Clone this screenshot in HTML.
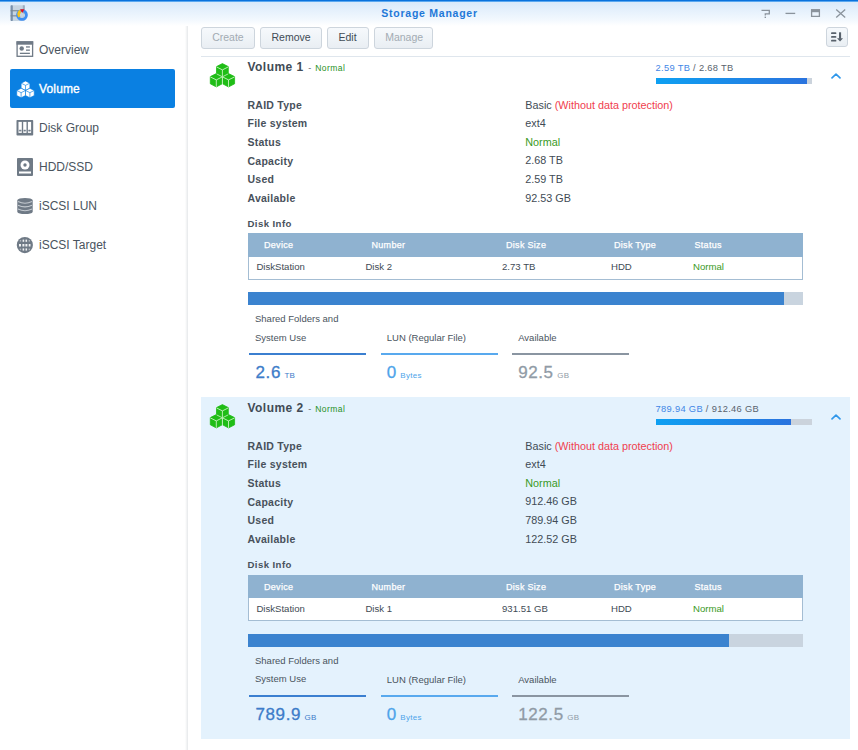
<!DOCTYPE html>
<html><head><meta charset="utf-8"><style>
html,body{margin:0;padding:0;width:858px;height:750px;overflow:hidden;background:#fff;}
body{position:relative;font-family:"Liberation Sans", sans-serif;}
.t{position:absolute;white-space:nowrap;line-height:1;}
.r{position:absolute;}
</style></head><body>
<div class="r" style="left:0px;top:0px;width:858px;height:26px;background:linear-gradient(#d6e8fa,#f4f9fe 80%,#ffffff);"></div>
<div class="r" style="left:0px;top:0px;width:858px;height:1px;background:#0a72dc;"></div>
<div class="r" style="left:0px;top:1px;width:858px;height:0.6px;background:#5aa8f0;"></div>
<div class="t" style="left:381.3px;top:8.31px;font-size:10.5px;color:#1e78d8;font-weight:700;letter-spacing:0.75px;">Storage Manager</div>
<svg class="r" style="left:9px;top:3px" width="22" height="21" viewBox="0 0 22 21">
<rect x="1.6" y="2.3" width="14" height="15.6" rx="1" fill="#c6d4e1"/>
<rect x="1.6" y="2.3" width="2.2" height="15.6" rx="0.6" fill="#7890ab"/>
<rect x="13.8" y="2.3" width="2" height="9" fill="#9aacbf"/>
<rect x="1.6" y="7.2" width="13" height="1.1" fill="#7b8793"/>
<rect x="1.6" y="12.3" width="13" height="1.1" fill="#7b8793"/>
<circle cx="13" cy="12" r="4.4" fill="none" stroke="#3e8ff2" stroke-width="2.9"/>
<path d="M9.3 14.6 Q6.5 9.5 11.2 6.6 L12.2 10.6 Q10.6 12 10.9 13.6 Z" fill="#f7c21a"/>
<path d="M11.1 6.2 L15.4 6.3 L13.3 10 Z" fill="#e8101c"/>
<circle cx="13" cy="12" r="2.2" fill="#c6d4e1"/>
</svg>
<svg class="r" style="left:755px;top:2px" width="100" height="22" viewBox="0 0 100 22">
<g fill="none" stroke="#8a939c" stroke-width="1.3">
<path d="M6.5 8.3 L14.3 8.3 L14.3 11.8 L10.3 11.8 L10.3 13.5"/>
<path d="M30.5 11.4 L40.2 11.4"/>
<path d="M56.6 7.8 L64.4 7.8 L64.4 14.3 L56.6 14.3 Z"/>
<path d="M81.2 7.4 L90.2 15.4 M90.2 7.4 L81.2 15.4"/>
</g>
<rect x="9.6" y="14.6" width="1.4" height="1.4" fill="#8a939c"/>
<rect x="56" y="7.2" width="9" height="3" fill="#8a939c"/>
</svg>
<div class="r" style="left:184.5px;top:26px;width:3.5px;height:724px;background:linear-gradient(90deg,#ffffff,#f3f4f5 50%,#e5e8ea);"></div>
<div class="r" style="left:10px;top:69px;width:165px;height:39px;background:#0a80e2;border-radius:2px;"></div>
<div class="t" style="left:39px;top:43.84px;font-size:12px;color:#4a545e;font-weight:400;letter-spacing:0px;">Overview</div>
<div class="t" style="left:39px;top:82.84px;font-size:12px;color:#ffffff;font-weight:400;letter-spacing:0.15px;-webkit-text-stroke:0.35px #fff;">Volume</div>
<div class="t" style="left:39px;top:121.84px;font-size:12px;color:#4a545e;font-weight:400;letter-spacing:0px;">Disk Group</div>
<div class="t" style="left:39px;top:160.84px;font-size:12px;color:#4a545e;font-weight:400;letter-spacing:0px;">HDD/SSD</div>
<div class="t" style="left:39px;top:199.84px;font-size:12px;color:#4a545e;font-weight:400;letter-spacing:0px;">iSCSI LUN</div>
<div class="t" style="left:39px;top:238.84px;font-size:12px;color:#4a545e;font-weight:400;letter-spacing:0px;">iSCSI Target</div>
<svg class="r" style="left:16px;top:41px" width="18" height="17" viewBox="0 0 18 17">
<rect x="1.1" y="0.9" width="15.5" height="14.4" fill="none" stroke="#6f7a86" stroke-width="1.3"/>
<rect x="0.5" y="0.3" width="16.7" height="3.4" fill="#6f7a86"/>
<circle cx="5.7" cy="7.5" r="2.2" fill="#6f7a86"/>
<rect x="10" y="5.3" width="3.9" height="1.3" fill="#6f7a86"/>
<rect x="10" y="8.5" width="3.9" height="1.3" fill="#6f7a86"/>
<rect x="3.9" y="11.7" width="10" height="1.3" fill="#6f7a86"/>
</svg>
<svg class="r" style="left:15.5px;top:79.8px" width="19" height="18" viewBox="0 0 26 24">
<g fill="#ffffff" stroke="#0a80e2" stroke-width="0.9" stroke-linejoin="round">
<path d="M13 1 L19 4 L19 11 L13 14 L7 11 L7 4 Z"/>
<path d="M7 11 L13 14 L13 21 L7 24 L1 21 L1 14 Z"/>
<path d="M19 11 L25 14 L25 21 L19 24 L13 21 L13 14 Z"/>
</g>
<g fill="none" stroke="#0a80e2" stroke-width="0.9">
<path d="M7 4 L13 7 L19 4 M13 7 L13 14"/>
<path d="M1 14 L7 17 L13 14 M7 17 L7 24"/>
<path d="M13 14 L19 17 L25 14 M19 17 L19 24"/>
</g></svg>
<svg class="r" style="left:16px;top:119px" width="18" height="17" viewBox="0 0 18 17">
<rect x="0.5" y="0.9" width="16.7" height="15.6" rx="0.8" fill="#6f7a86"/>
<rect x="2.5" y="2.9" width="3.3" height="11" fill="#fff"/>
<rect x="7.2" y="2.9" width="3.3" height="11" fill="#fff"/>
<rect x="11.9" y="2.9" width="3.2" height="11" fill="#fff"/>
<g fill="#a9b0b8"><rect x="2.5" y="10.8" width="3.3" height="1.6"/><rect x="7.2" y="10.8" width="3.3" height="1.6"/><rect x="11.9" y="10.8" width="3.2" height="1.6"/></g>
<g fill="#6f7a86"><circle cx="4.1" cy="11.6" r="0.8"/><circle cx="8.8" cy="11.6" r="0.8"/><circle cx="13.5" cy="11.6" r="0.8"/></g>
</svg>
<svg class="r" style="left:17px;top:158px" width="16" height="18" viewBox="0 0 16 18">
<rect x="0" y="0" width="16" height="18" rx="1" fill="#6f7a86"/>
<circle cx="8" cy="7" r="4.5" fill="#fff"/>
<circle cx="8" cy="7" r="1.7" fill="#6f7a86"/>
<rect x="2" y="13.5" width="12" height="2" fill="#fff"/>
</svg>
<svg class="r" style="left:17px;top:197px" width="16" height="18" viewBox="0 0 16 18">
<path d="M0.3 3 A7.8 2.5 0 0 1 15.7 3 L15.7 15 A7.8 2.5 0 0 1 0.3 15 Z" fill="#6f7a86"/>
<g fill="none" stroke="#c4cad0" stroke-width="1.1">
<path d="M1 4.6 Q8 8 15 4.6"/>
<path d="M1 8.2 Q8 11.6 15 8.2"/>
<path d="M1 12 Q8 15.4 15 12"/>
</g>
</svg>
<svg class="r" style="left:16px;top:236px" width="18" height="18" viewBox="0 0 18 18">
<circle cx="8.85" cy="9.1" r="8.1" fill="#6f7a86"/>
<g fill="#fff" opacity="0.9">
<rect x="6.6" y="3.6" width="1.6" height="2.2"/><rect x="9.5" y="3.6" width="1.6" height="2.2"/>
<rect x="3" y="8" width="2" height="2.5"/><rect x="6.4" y="8" width="2" height="2.5"/><rect x="9.4" y="8" width="2" height="2.5"/><rect x="12.7" y="8" width="1.8" height="2.5"/>
<rect x="6.6" y="12.4" width="1.6" height="2.2"/><rect x="9.5" y="12.4" width="1.6" height="2.2"/>
</g>
<g fill="#fff" opacity="0.45"><rect x="3.8" y="4" width="1.4" height="1.6"/><rect x="12.6" y="4" width="1.4" height="1.6"/><rect x="3.8" y="12.6" width="1.4" height="1.6"/><rect x="12.6" y="12.6" width="1.4" height="1.6"/></g>
</svg>
<div class="r" style="left:201px;top:26.5px;width:54px;height:22px;background:linear-gradient(#f6f9fc,#e9eef3);box-sizing:border-box;border:1px solid #cdd5dd;border-radius:3px;"></div>
<div class="t" style="left:212.2px;top:31.91px;font-size:10.5px;color:#a3abb3;font-weight:400;letter-spacing:0px;">Create</div>
<div class="r" style="left:260px;top:26.5px;width:62px;height:22px;background:linear-gradient(#f6f9fc,#e9eef3);box-sizing:border-box;border:1px solid #cdd5dd;border-radius:3px;"></div>
<div class="t" style="left:271.5px;top:31.91px;font-size:10.5px;color:#414b55;font-weight:400;letter-spacing:0px;">Remove</div>
<div class="r" style="left:327px;top:26.5px;width:42px;height:22px;background:linear-gradient(#f6f9fc,#e9eef3);box-sizing:border-box;border:1px solid #cdd5dd;border-radius:3px;"></div>
<div class="t" style="left:338.5px;top:31.91px;font-size:10.5px;color:#414b55;font-weight:400;letter-spacing:0px;">Edit</div>
<div class="r" style="left:374px;top:26.5px;width:59px;height:22px;background:linear-gradient(#f6f9fc,#e9eef3);box-sizing:border-box;border:1px solid #cdd5dd;border-radius:3px;"></div>
<div class="t" style="left:385.2px;top:31.91px;font-size:10.5px;color:#a3abb3;font-weight:400;letter-spacing:0px;">Manage</div>
<div class="r" style="left:826px;top:27px;width:22px;height:20px;background:linear-gradient(#f6f9fc,#e9eef3);box-sizing:border-box;border:1px solid #cdd5dd;border-radius:3px;"></div>
<svg class="r" style="left:826px;top:27px" width="22" height="20" viewBox="0 0 22 20">
<g fill="#58616b"><rect x="5" y="5.3" width="5.4" height="1.8" rx="0.9"/><rect x="5" y="9" width="5.4" height="1.8" rx="0.9"/><rect x="5" y="12.8" width="5.4" height="1.8" rx="0.9"/>
<rect x="13" y="5.3" width="2.1" height="6.5"/><path d="M11 11.3 L17 11.3 L14.05 14.6 Z"/></g></svg>
<div class="r" style="left:201px;top:56px;width:649px;height:1px;background:#dfe6ed;"></div>
<div class="r" style="left:201px;top:397px;width:649px;height:342px;background:#e4f2fd;"></div>
<svg class="r" style="left:209px;top:63px" width="27" height="25" viewBox="0 0 27 25">
<g fill="#1fbd16" stroke="#1fbd16" stroke-width="0.8" stroke-linejoin="round">
<path d="M7.3 10.6 L13.2 13.6 L13.2 20.8 L7.3 23.9 L1.3 20.8 L1.3 13.6 Z"/>
<path d="M19.5 10.6 L25.6 13.6 L25.6 20.8 L19.5 23.9 L13.6 20.8 L13.6 13.6 Z"/>
<path d="M13.4 0.6 L19.3 3.6 L19.3 10.8 L13.4 13.8 L7.5 10.8 L7.5 3.6 Z"/>
</g>
<g fill="none" stroke="#c8f2c0" stroke-width="0.9">
<path d="M7.5 3.9 L13.4 6.9 L19.3 3.9 M13.4 6.9 L13.4 13.6"/>
<path d="M1.3 13.9 L7.3 16.9 L13.2 13.9 M7.3 16.9 L7.3 23.9"/>
<path d="M13.6 13.9 L19.5 16.9 L25.6 13.9 M19.5 16.9 L19.5 23.9"/>
<path d="M7.6 10.9 L13.4 13.8 L19.2 10.9" stroke-width="0.8"/>
<path d="M13.4 13.6 L13.4 21" stroke-width="1"/>
</g></svg>
<div class="t" style="left:247.5px;top:61.24px;font-size:12px;color:#414b55;font-weight:700;letter-spacing:0.45px;">Volume 1</div>
<div class="t" style="left:308.3px;top:63.78px;font-size:9px;color:#5a6470;font-weight:400;letter-spacing:0px;">-</div>
<div class="t" style="left:315.3px;top:64.30px;font-size:8.5px;color:#1f9024;font-weight:400;letter-spacing:0.42px;">Normal</div>
<div class="t" style="left:655.5px;top:63.73px;font-size:9.3px;color:#59636d;font-weight:400;letter-spacing:0.33px;"><span style="color:#3f86e6">2.59 TB</span> / 2.68 TB</div>
<div class="r" style="left:655.5px;top:78px;width:156.5px;height:6px;background:#cbd3dc;"></div>
<div class="r" style="left:655.5px;top:78px;width:151.492px;height:6px;background:linear-gradient(90deg,#0ea0f2,#2a73de);"></div>
<svg class="r" style="left:830px;top:72px" width="12" height="9" viewBox="0 0 12 9"><path d="M2 5.8 L6 2.1 L10 5.8" fill="none" stroke="#2f97ea" stroke-width="1.7" stroke-linecap="round" stroke-linejoin="round"/></svg>
<div class="t" style="left:247.5px;top:100.11px;font-size:10.5px;color:#48515b;font-weight:700;letter-spacing:0.25px;">RAID Type</div>
<div class="t" style="left:525.3px;top:99.86px;font-size:10.8px;color:#414b55;font-weight:400;letter-spacing:0px;">Basic <span style="color:#f0404e">(Without data protection)</span></div>
<div class="t" style="left:247.5px;top:118.41px;font-size:10.5px;color:#48515b;font-weight:700;letter-spacing:0.25px;">File system</div>
<div class="t" style="left:525.3px;top:118.16px;font-size:10.8px;color:#414b55;font-weight:400;letter-spacing:0px;">ext4</div>
<div class="t" style="left:247.5px;top:136.91px;font-size:10.5px;color:#48515b;font-weight:700;letter-spacing:0.25px;">Status</div>
<div class="t" style="left:525.3px;top:136.66px;font-size:10.8px;color:#414b55;font-weight:400;letter-spacing:0px;"><span style="color:#3a9a25">Normal</span></div>
<div class="t" style="left:247.5px;top:155.51px;font-size:10.5px;color:#48515b;font-weight:700;letter-spacing:0.25px;">Capacity</div>
<div class="t" style="left:525.3px;top:155.26px;font-size:10.8px;color:#414b55;font-weight:400;letter-spacing:0px;">2.68 TB</div>
<div class="t" style="left:247.5px;top:174.11px;font-size:10.5px;color:#48515b;font-weight:700;letter-spacing:0.25px;">Used</div>
<div class="t" style="left:525.3px;top:173.86px;font-size:10.8px;color:#414b55;font-weight:400;letter-spacing:0px;">2.59 TB</div>
<div class="t" style="left:247.5px;top:193.11px;font-size:10.5px;color:#48515b;font-weight:700;letter-spacing:0.25px;">Available</div>
<div class="t" style="left:525.3px;top:192.86px;font-size:10.8px;color:#414b55;font-weight:400;letter-spacing:0px;">92.53 GB</div>
<div class="t" style="left:247.5px;top:218.87px;font-size:9.6px;color:#48515b;font-weight:700;letter-spacing:0.42px;">Disk Info</div>
<div class="r" style="left:247.5px;top:233px;width:555.5px;height:23.5px;background:#8fb2d0;"></div>
<div class="r" style="left:247.5px;top:256.5px;width:555.5px;height:23px;background:#ffffff;box-sizing:border-box;border:1px solid #a4bdd3;border-top:none;"></div>
<div class="t" style="left:264px;top:240.98px;font-size:9px;color:#ffffff;font-weight:400;letter-spacing:0.3px;-webkit-text-stroke:0.25px #fff;">Device</div>
<div class="t" style="left:371.5px;top:240.98px;font-size:9px;color:#ffffff;font-weight:400;letter-spacing:0.3px;-webkit-text-stroke:0.25px #fff;">Number</div>
<div class="t" style="left:506px;top:240.98px;font-size:9px;color:#ffffff;font-weight:400;letter-spacing:0.3px;-webkit-text-stroke:0.25px #fff;">Disk Size</div>
<div class="t" style="left:614px;top:240.98px;font-size:9px;color:#ffffff;font-weight:400;letter-spacing:0.3px;-webkit-text-stroke:0.25px #fff;">Disk Type</div>
<div class="t" style="left:694.5px;top:240.98px;font-size:9px;color:#ffffff;font-weight:400;letter-spacing:0.3px;-webkit-text-stroke:0.25px #fff;">Status</div>
<div class="t" style="left:256.4px;top:261.97px;font-size:9.6px;color:#414b55;font-weight:400;letter-spacing:0px;">DiskStation</div>
<div class="t" style="left:365.4px;top:261.97px;font-size:9.6px;color:#414b55;font-weight:400;letter-spacing:0px;">Disk 2</div>
<div class="t" style="left:502px;top:261.97px;font-size:9.6px;color:#414b55;font-weight:400;letter-spacing:0px;">2.73 TB</div>
<div class="t" style="left:611px;top:261.97px;font-size:9.6px;color:#414b55;font-weight:400;letter-spacing:0px;">HDD</div>
<div class="t" style="left:693px;top:261.97px;font-size:9.6px;color:#3b9a1e;font-weight:400;letter-spacing:0px;">Normal</div>
<div class="r" style="left:247.5px;top:292px;width:555.5px;height:13px;background:#c9d4df;"></div>
<div class="r" style="left:247.5px;top:292px;width:536.8168165467625px;height:13px;background:#3b83cf;"></div>
<div class="t" style="left:255px;top:314.16px;font-size:9.5px;color:#4a545e;font-weight:400;letter-spacing:0px;">Shared Folders and</div>
<div class="t" style="left:255px;top:332.66px;font-size:9.5px;color:#4a545e;font-weight:400;letter-spacing:0px;">System Use</div>
<div class="t" style="left:386.8px;top:332.96px;font-size:9.5px;color:#4a545e;font-weight:400;letter-spacing:0px;">LUN (Regular File)</div>
<div class="t" style="left:518.2px;top:332.96px;font-size:9.5px;color:#4a545e;font-weight:400;letter-spacing:0px;">Available</div>
<div class="r" style="left:248.5px;top:353px;width:117.5px;height:2px;background:#3b7fd0;"></div>
<div class="r" style="left:380.5px;top:353px;width:117.5px;height:2px;background:#58a9ee;"></div>
<div class="r" style="left:512px;top:353px;width:117px;height:2px;background:#8a95a1;"></div>
<div class="t" style="left:255.5px;top:364.21px;font-size:17px;color:#3d7cc9;font-weight:400;letter-spacing:0.6px;-webkit-text-stroke:0.3px #3d7cc9;">2.6<span style="font-size:8px;margin-left:3.5px;letter-spacing:0.3px;-webkit-text-stroke:0">TB</span></div>
<div class="t" style="left:386.8px;top:364.21px;font-size:17px;color:#4ea4ea;font-weight:400;letter-spacing:0.6px;-webkit-text-stroke:0.3px #4ea4ea;">0<span style="font-size:8px;margin-left:3.5px;letter-spacing:0.3px;-webkit-text-stroke:0">Bytes</span></div>
<div class="t" style="left:518.2px;top:364.21px;font-size:17px;color:#909ba6;font-weight:400;letter-spacing:0.6px;-webkit-text-stroke:0.3px #909ba6;">92.5<span style="font-size:8px;margin-left:3.5px;letter-spacing:0.3px;-webkit-text-stroke:0">GB</span></div>
<svg class="r" style="left:209px;top:404px" width="27" height="25" viewBox="0 0 27 25">
<g fill="#1fbd16" stroke="#1fbd16" stroke-width="0.8" stroke-linejoin="round">
<path d="M7.3 10.6 L13.2 13.6 L13.2 20.8 L7.3 23.9 L1.3 20.8 L1.3 13.6 Z"/>
<path d="M19.5 10.6 L25.6 13.6 L25.6 20.8 L19.5 23.9 L13.6 20.8 L13.6 13.6 Z"/>
<path d="M13.4 0.6 L19.3 3.6 L19.3 10.8 L13.4 13.8 L7.5 10.8 L7.5 3.6 Z"/>
</g>
<g fill="none" stroke="#c8f2c0" stroke-width="0.9">
<path d="M7.5 3.9 L13.4 6.9 L19.3 3.9 M13.4 6.9 L13.4 13.6"/>
<path d="M1.3 13.9 L7.3 16.9 L13.2 13.9 M7.3 16.9 L7.3 23.9"/>
<path d="M13.6 13.9 L19.5 16.9 L25.6 13.9 M19.5 16.9 L19.5 23.9"/>
<path d="M7.6 10.9 L13.4 13.8 L19.2 10.9" stroke-width="0.8"/>
<path d="M13.4 13.6 L13.4 21" stroke-width="1"/>
</g></svg>
<div class="t" style="left:247.5px;top:402.24px;font-size:12px;color:#414b55;font-weight:700;letter-spacing:0.45px;">Volume 2</div>
<div class="t" style="left:308.3px;top:404.78px;font-size:9px;color:#5a6470;font-weight:400;letter-spacing:0px;">-</div>
<div class="t" style="left:315.3px;top:405.30px;font-size:8.5px;color:#1f9024;font-weight:400;letter-spacing:0.42px;">Normal</div>
<div class="t" style="left:655.5px;top:404.73px;font-size:9.3px;color:#59636d;font-weight:400;letter-spacing:0.33px;"><span style="color:#3f86e6">789.94 GB</span> / 912.46 GB</div>
<div class="r" style="left:655.5px;top:419px;width:156.5px;height:6px;background:#cbd3dc;"></div>
<div class="r" style="left:655.5px;top:419px;width:135.529px;height:6px;background:linear-gradient(90deg,#0ea0f2,#2a73de);"></div>
<svg class="r" style="left:830px;top:413px" width="12" height="9" viewBox="0 0 12 9"><path d="M2 5.8 L6 2.1 L10 5.8" fill="none" stroke="#2f97ea" stroke-width="1.7" stroke-linecap="round" stroke-linejoin="round"/></svg>
<div class="t" style="left:247.5px;top:441.11px;font-size:10.5px;color:#48515b;font-weight:700;letter-spacing:0.25px;">RAID Type</div>
<div class="t" style="left:525.3px;top:440.86px;font-size:10.8px;color:#414b55;font-weight:400;letter-spacing:0px;">Basic <span style="color:#f0404e">(Without data protection)</span></div>
<div class="t" style="left:247.5px;top:459.41px;font-size:10.5px;color:#48515b;font-weight:700;letter-spacing:0.25px;">File system</div>
<div class="t" style="left:525.3px;top:459.16px;font-size:10.8px;color:#414b55;font-weight:400;letter-spacing:0px;">ext4</div>
<div class="t" style="left:247.5px;top:477.91px;font-size:10.5px;color:#48515b;font-weight:700;letter-spacing:0.25px;">Status</div>
<div class="t" style="left:525.3px;top:477.66px;font-size:10.8px;color:#414b55;font-weight:400;letter-spacing:0px;"><span style="color:#3a9a25">Normal</span></div>
<div class="t" style="left:247.5px;top:496.51px;font-size:10.5px;color:#48515b;font-weight:700;letter-spacing:0.25px;">Capacity</div>
<div class="t" style="left:525.3px;top:496.26px;font-size:10.8px;color:#414b55;font-weight:400;letter-spacing:0px;">912.46 GB</div>
<div class="t" style="left:247.5px;top:515.11px;font-size:10.5px;color:#48515b;font-weight:700;letter-spacing:0.25px;">Used</div>
<div class="t" style="left:525.3px;top:514.86px;font-size:10.8px;color:#414b55;font-weight:400;letter-spacing:0px;">789.94 GB</div>
<div class="t" style="left:247.5px;top:534.11px;font-size:10.5px;color:#48515b;font-weight:700;letter-spacing:0.25px;">Available</div>
<div class="t" style="left:525.3px;top:533.86px;font-size:10.8px;color:#414b55;font-weight:400;letter-spacing:0px;">122.52 GB</div>
<div class="t" style="left:247.5px;top:560.47px;font-size:9.6px;color:#48515b;font-weight:700;letter-spacing:0.42px;">Disk Info</div>
<div class="r" style="left:247.5px;top:574.6px;width:555.5px;height:23.5px;background:#8fb2d0;"></div>
<div class="r" style="left:247.5px;top:598.1px;width:555.5px;height:23px;background:#ffffff;box-sizing:border-box;border:1px solid #a4bdd3;border-top:none;"></div>
<div class="t" style="left:264px;top:582.58px;font-size:9px;color:#ffffff;font-weight:400;letter-spacing:0.3px;-webkit-text-stroke:0.25px #fff;">Device</div>
<div class="t" style="left:371.5px;top:582.58px;font-size:9px;color:#ffffff;font-weight:400;letter-spacing:0.3px;-webkit-text-stroke:0.25px #fff;">Number</div>
<div class="t" style="left:506px;top:582.58px;font-size:9px;color:#ffffff;font-weight:400;letter-spacing:0.3px;-webkit-text-stroke:0.25px #fff;">Disk Size</div>
<div class="t" style="left:614px;top:582.58px;font-size:9px;color:#ffffff;font-weight:400;letter-spacing:0.3px;-webkit-text-stroke:0.25px #fff;">Disk Type</div>
<div class="t" style="left:694.5px;top:582.58px;font-size:9px;color:#ffffff;font-weight:400;letter-spacing:0.3px;-webkit-text-stroke:0.25px #fff;">Status</div>
<div class="t" style="left:256.4px;top:603.57px;font-size:9.6px;color:#414b55;font-weight:400;letter-spacing:0px;">DiskStation</div>
<div class="t" style="left:365.4px;top:603.57px;font-size:9.6px;color:#414b55;font-weight:400;letter-spacing:0px;">Disk 1</div>
<div class="t" style="left:502px;top:603.57px;font-size:9.6px;color:#414b55;font-weight:400;letter-spacing:0px;">931.51 GB</div>
<div class="t" style="left:611px;top:603.57px;font-size:9.6px;color:#414b55;font-weight:400;letter-spacing:0px;">HDD</div>
<div class="t" style="left:693px;top:603.57px;font-size:9.6px;color:#3b9a1e;font-weight:400;letter-spacing:0px;">Normal</div>
<div class="r" style="left:247.5px;top:633.6px;width:555.5px;height:13px;background:#c9d4df;"></div>
<div class="r" style="left:247.5px;top:633.6px;width:481.0669964028777px;height:13px;background:#3b83cf;"></div>
<div class="t" style="left:255px;top:655.76px;font-size:9.5px;color:#4a545e;font-weight:400;letter-spacing:0px;">Shared Folders and</div>
<div class="t" style="left:255px;top:674.26px;font-size:9.5px;color:#4a545e;font-weight:400;letter-spacing:0px;">System Use</div>
<div class="t" style="left:386.8px;top:674.56px;font-size:9.5px;color:#4a545e;font-weight:400;letter-spacing:0px;">LUN (Regular File)</div>
<div class="t" style="left:518.2px;top:674.56px;font-size:9.5px;color:#4a545e;font-weight:400;letter-spacing:0px;">Available</div>
<div class="r" style="left:248.5px;top:694.6px;width:117.5px;height:2px;background:#3b7fd0;"></div>
<div class="r" style="left:380.5px;top:694.6px;width:117.5px;height:2px;background:#58a9ee;"></div>
<div class="r" style="left:512px;top:694.6px;width:117px;height:2px;background:#8a95a1;"></div>
<div class="t" style="left:255.5px;top:705.81px;font-size:17px;color:#3d7cc9;font-weight:400;letter-spacing:0.6px;-webkit-text-stroke:0.3px #3d7cc9;">789.9<span style="font-size:8px;margin-left:3.5px;letter-spacing:0.3px;-webkit-text-stroke:0">GB</span></div>
<div class="t" style="left:386.8px;top:705.81px;font-size:17px;color:#4ea4ea;font-weight:400;letter-spacing:0.6px;-webkit-text-stroke:0.3px #4ea4ea;">0<span style="font-size:8px;margin-left:3.5px;letter-spacing:0.3px;-webkit-text-stroke:0">Bytes</span></div>
<div class="t" style="left:518.2px;top:705.81px;font-size:17px;color:#909ba6;font-weight:400;letter-spacing:0.6px;-webkit-text-stroke:0.3px #909ba6;">122.5<span style="font-size:8px;margin-left:3.5px;letter-spacing:0.3px;-webkit-text-stroke:0">GB</span></div>
</body></html>
